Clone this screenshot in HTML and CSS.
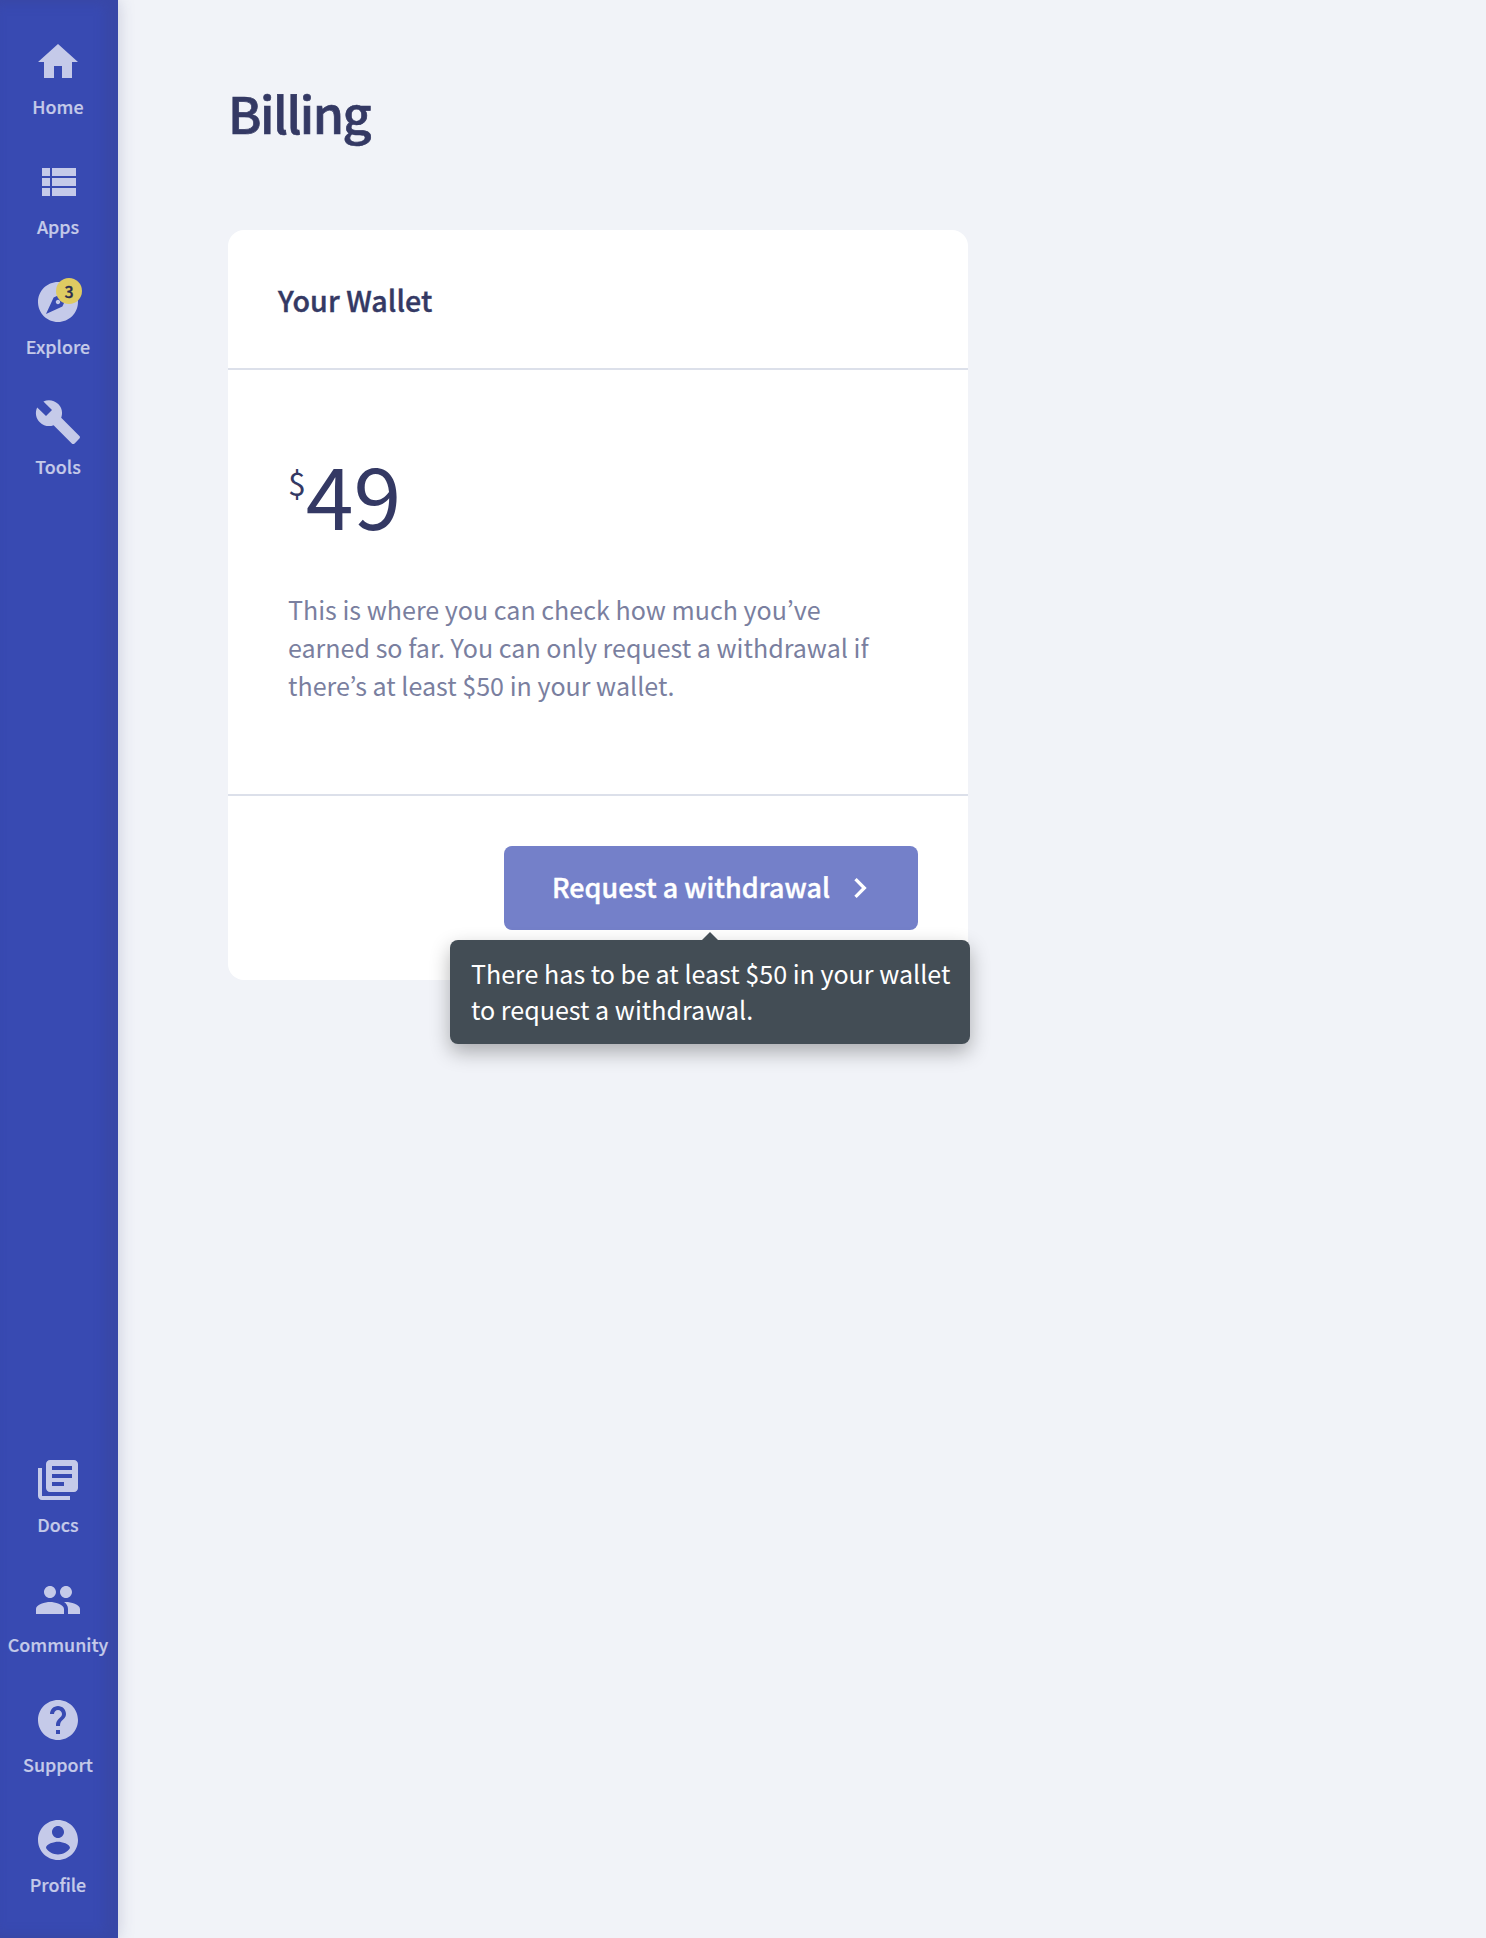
FILE: index.html
```html
<!DOCTYPE html>
<html lang="en">
<head>
<meta charset="utf-8">
<title>Billing</title>
<link rel="stylesheet" href="styles.css">
</head>
<body>
<div class="app">
  <nav class="sidebar">
    <div class="nav-group">
      <a class="nav-item">
        <svg class="nav-icon" viewBox="0 0 24 24"><path d="M10 20v-6h4v6h5v-8h3L12 3 2 12h3v8z"/></svg>
        <span class="nav-label">Home</span>
      </a>
      <a class="nav-item">
        <svg class="nav-icon" viewBox="0 0 24 24"><path d="M4 14h4v-4H4v4zm0 5h4v-4H4v4zM4 9h4V5H4v4zm5 5h12v-4H9v4zm0 5h12v-4H9v4zM9 5v4h12V5H9z"/></svg>
        <span class="nav-label">Apps</span>
      </a>
      <a class="nav-item">
        <svg class="nav-icon" viewBox="0 0 24 24"><path d="M12 10.9c-.61 0-1.1.49-1.1 1.1s.49 1.1 1.1 1.1c.61 0 1.1-.49 1.1-1.1s-.49-1.1-1.1-1.1zM12 2C6.48 2 2 6.48 2 12s4.48 10 10 10 10-4.48 10-10S17.52 2 12 2zm2.19 12.19L6 18l3.81-8.19L18 6l-3.81 8.19z"/></svg>
        <span class="badge">3</span>
        <span class="nav-label">Explore</span>
      </a>
      <a class="nav-item">
        <svg class="nav-icon" viewBox="0 0 24 24"><path d="M22.7 19l-9.1-9.1c.9-2.3.4-5-1.5-6.9-2-2-5-2.4-7.4-1.3L9 6 6 9 1.6 4.7C.4 7.1.9 10.1 2.9 12.1c1.9 1.9 4.6 2.4 6.9 1.5l9.1 9.1c.4.4 1 .4 1.4 0l2.3-2.3c.5-.4.5-1.1.1-1.4z"/></svg>
        <span class="nav-label">Tools</span>
      </a>
    </div>
    <div class="nav-group">
      <a class="nav-item">
        <svg class="nav-icon" viewBox="0 0 24 24"><path d="M4 6H2v14c0 1.1.9 2 2 2h14v-2H4V6zm16-4H8c-1.1 0-2 .9-2 2v12c0 1.1.9 2 2 2h12c1.1 0 2-.9 2-2V4c0-1.1-.9-2-2-2zm-1 9H9V9h10v2zm-4 4H9v-2h6v2zm4-8H9V5h10v2z"/></svg>
        <span class="nav-label">Docs</span>
      </a>
      <a class="nav-item">
        <svg class="nav-icon" viewBox="0 0 24 24"><path d="M16 11c1.66 0 2.99-1.34 2.99-3S17.66 5 16 5c-1.66 0-3 1.34-3 3s1.34 3 3 3zm-8 0c1.66 0 2.99-1.34 2.99-3S9.66 5 8 5C6.34 5 5 6.34 5 8s1.34 3 3 3zm0 2c-2.33 0-7 1.17-7 3.5V19h14v-2.5c0-2.33-4.67-3.5-7-3.5zm8 0c-.29 0-.62.02-.97.05 1.16.84 1.97 1.97 1.97 3.45V19h6v-2.5c0-2.33-4.67-3.5-7-3.5z"/></svg>
        <span class="nav-label">Community</span>
      </a>
      <a class="nav-item">
        <svg class="nav-icon" viewBox="0 0 24 24"><path d="M12 2C6.48 2 2 6.48 2 12s4.48 10 10 10 10-4.48 10-10S17.52 2 12 2zm1 17h-2v-2h2v2zm2.07-7.75l-.9.92C13.45 12.9 13 13.5 13 15h-2v-.5c0-1.1.45-2.1 1.17-2.83l1.24-1.26c.37-.36.59-.86.59-1.41 0-1.1-.9-2-2-2s-2 .9-2 2H8c0-2.21 1.79-4 4-4s4 1.79 4 4c0 .88-.36 1.68-.93 2.25z"/></svg>
        <span class="nav-label">Support</span>
      </a>
      <a class="nav-item">
        <svg class="nav-icon" viewBox="0 0 24 24"><path d="M12 2C6.48 2 2 6.48 2 12s4.48 10 10 10 10-4.48 10-10S17.52 2 12 2zm0 3c1.66 0 3 1.34 3 3s-1.34 3-3 3-3-1.34-3-3 1.34-3 3-3zm0 14.2c-2.5 0-4.71-1.28-6-3.22.03-1.99 4-3.08 6-3.08 1.99 0 5.97 1.09 6 3.08-1.29 1.94-3.5 3.22-6 3.22z"/></svg>
        <span class="nav-label">Profile</span>
      </a>
    </div>
  </nav>
  <main class="content">
    <h1 class="page-title">Billing</h1>
    <section class="card">
      <h2 class="card-header">Your Wallet</h2>
      <div class="card-body">
        <div class="amount"><span class="currency">$</span><span class="value">49</span></div>
        <p class="note">This is where you can check how much you’ve<br>earned so far. You can only request a withdrawal if<br>there’s at least $50 in your wallet.</p>
      </div>
      <div class="card-footer">
        <div class="action">
          <button class="button" type="button">
            <span class="button-label">Request a withdrawal</span>
            <svg class="chevron" viewBox="0 0 24 24"><path d="M10 6L8.59 7.41 13.17 12l-4.58 4.59L10 18l6-6z"/></svg>
          </button>
          <div class="tooltip" role="tooltip">There has to be at least $50 in your wallet<br>to request a withdrawal.</div>
        </div>
      </div>
    </section>
  </main>
</div>
</body>
</html>
```
FILE: styles.css
```css
* { box-sizing: border-box; }

body {
  margin: 0;
  background: #f1f3f8;
  color: #343964;
  font-family: "Noto Sans CJK KR", "Noto Sans", sans-serif;
}

.app { display: flex; min-height: 1938px; }

.sidebar {
  display: flex;
  flex-direction: column;
  justify-content: space-between;
  flex: none;
  width: 118px;
  padding: 38px 2px 34px 0;
  background: #384ab2;
  box-shadow: inset -9px 0 10px 5px rgba(56, 70, 160, 0.6), 0 0 16px rgba(52, 57, 120, 0.22);
}

.nav-group { display: flex; flex-direction: column; gap: 32px; }

.nav-item {
  position: relative;
  display: flex;
  flex-direction: column;
  align-items: center;
  height: 88px;
  color: #c5cae9;
}

.nav-icon { flex: none; width: 48px; height: 48px; fill: currentColor; }

.nav-label {
  margin-top: 8px;
  font-size: 17.9px;
  font-weight: 500;
  line-height: 24px;
  white-space: nowrap;
  -webkit-text-stroke: 0.2px currentColor;
}

.badge {
  position: absolute;
  top: 0;
  left: 56px;
  width: 26px;
  height: 26px;
  border-radius: 50%;
  background: #dfcb62;
  color: #2b2c50;
  font-size: 16px;
  font-weight: 500;
  line-height: 26px;
  text-align: center;
  -webkit-text-stroke: 0.3px currentColor;
}

.content { padding: 77px 0 0 110px; }

.page-title {
  margin: 0 0 83px;
  font-size: 50.2px;
  font-weight: 500;
  line-height: 70px;
  letter-spacing: -1.5px;
  -webkit-text-stroke: 0.7px currentColor;
}

.card { width: 740px; height: 750px; border-radius: 16px; background: #fff; }

.card-header {
  height: 140px;
  margin: 0;
  padding: 49px 50px;
  border-bottom: 2px solid #dce0ea;
  font-size: 28.6px;
  font-weight: 500;
  line-height: 42px;
  letter-spacing: 0.08px;
  -webkit-text-stroke: 0.4px currentColor;
}

.card-body { height: 426px; padding: 79px 60px; border-bottom: 2px solid #dce0ea; }

.amount { display: flex; height: 100px; margin-bottom: 41px; }

.currency { margin-top: 13px; font-size: 32px; line-height: 40px; }

.value { font-size: 86px; line-height: 88px; }

.note {
  margin: 0;
  color: #7a7f9f;
  font-size: 25.07px;
  line-height: 38px;
  white-space: nowrap;
}

.card-footer { display: flex; justify-content: flex-end; padding: 50px; }

.action { position: relative; }

.button {
  display: flex;
  align-items: center;
  width: 414px;
  height: 84px;
  padding: 0 38px 0 48px;
  justify-content: space-between;
  border: 0;
  border-radius: 8px;
  background: #7480c9;
  color: #fff;
  font: 500 26.9px/40px "Noto Sans CJK KR", "Noto Sans", sans-serif;
}

.button-label {
  padding-bottom: 2px;
  letter-spacing: 0.03px;
  white-space: nowrap;
  -webkit-text-stroke: 0.4px currentColor;
}

.chevron { flex: none; width: 40px; height: 40px; fill: currentColor; }

.tooltip {
  position: absolute;
  top: 94px;
  right: -52px;
  width: 520px;
  height: 104px;
  padding: 15px 20px 15px 21px;
  border-radius: 8px;
  background: #434d55;
  box-shadow: 0 8px 20px rgba(0, 0, 0, 0.3);
  color: #fff;
  font-size: 25.07px;
  line-height: 36px;
  white-space: nowrap;
}

.tooltip::before {
  content: "";
  position: absolute;
  top: -8px;
  left: 252px;
  border: 8px solid transparent;
  border-top: 0;
  border-bottom-color: #434d55;
}
```
